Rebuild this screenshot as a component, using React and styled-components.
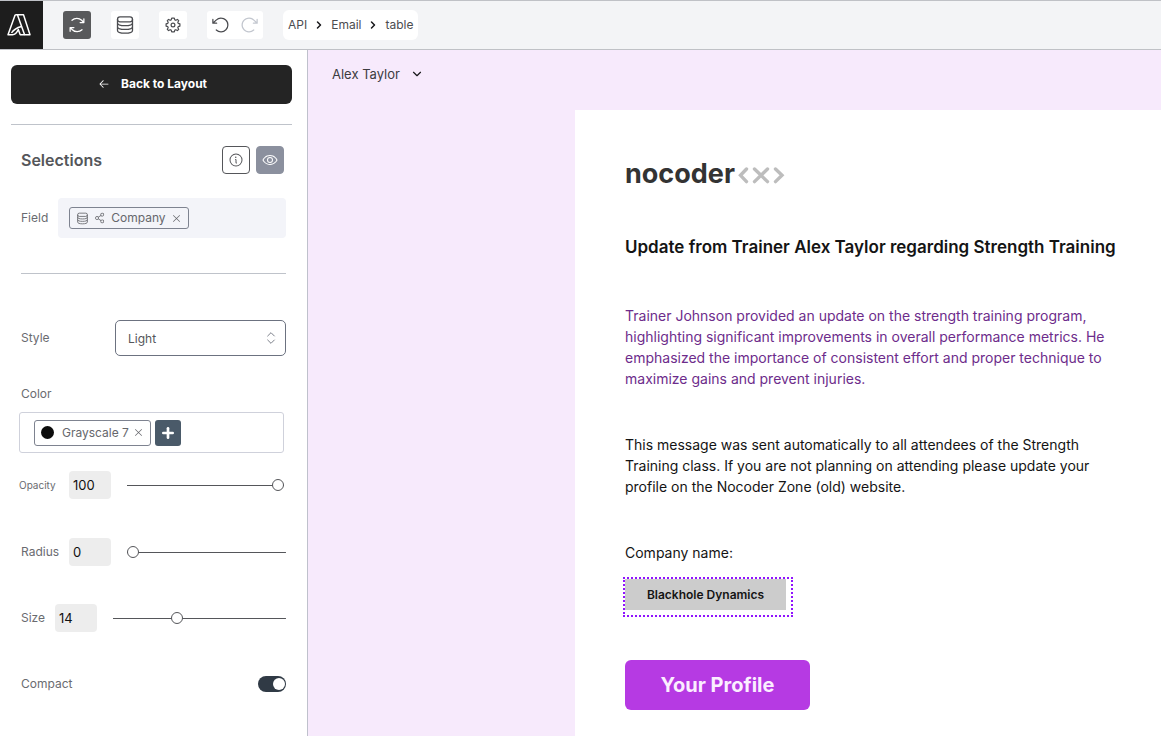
import React, { useState } from 'react';
import styled, { createGlobalStyle, css } from 'styled-components';
import {
    PiArrowsClockwise,
    PiArrowCounterClockwise,
    PiArrowClockwise,
    PiArrowLeft,
    PiInfo,
    PiEye,
    PiShareNetwork,
    PiX,
} from 'react-icons/pi';
import { LuChevronRight, LuChevronDown, LuChevronsUpDown, LuPlus } from 'react-icons/lu';

const GlobalStyle = createGlobalStyle`
    * {
        box-sizing: border-box;
    }

    body {
        margin: 0;
        background-color: #ffffff;
        color: #55565a;
        font-family: Inter, "Liberation Sans", sans-serif;
        font-size: 13px;
        line-height: 20px;
    }

    button, input, select {
        font: inherit;
        color: inherit;
        margin: 0;
    }

    button {
        border: 0;
        padding: 0;
        cursor: pointer;
    }

    svg {
        display: block;
        flex: none;
    }

    p, h1, h2 {
        margin: 0;
    }
`;

const Page = styled.div`
    display: flex;
    flex-direction: column;
    min-height: 100vh;
`;

const Header = styled.header`
    display: flex;
    align-items: center;
    height: 50px;
    background-color: #f3f4f6;
    border-top: 1px solid #bfc1c6;
    border-bottom: 1px solid #bfc1c6;
`;

const Brand = styled.a`
    display: flex;
    align-items: center;
    justify-content: center;
    width: 43px;
    height: 100%;
    padding-right: 4px;
    background-color: #1d1d1d;
    color: white;
`;

const Tools = styled.div`
    display: flex;
    gap: 20px;
    padding: 0 20px;
`;

const ToolGroup = styled.div`
    display: flex;
    border-radius: 3px;
    overflow: hidden;
`;

const ToolButton = styled.button`
    display: flex;
    align-items: center;
    justify-content: center;
    width: 28px;
    height: 28px;
    background-color: ${({ $active }) => ($active ? '#58595b' : '#ffffff')};
    color: ${({ $active }) => ($active ? '#ffffff' : '#4b4c50')};

    &:disabled {
        color: #c3c7cf;
    }
`;

const Breadcrumb = styled.nav`
    display: flex;
    align-items: center;
    gap: 6px;
    height: 30px;
    padding: 0 5px;
    border-radius: 6px;
    background-color: white;
    font-size: 12px;

    a {
        color: #4b4c50;
        text-decoration: none;
    }

    svg {
        color: #18181b;
    }
`;

const Main = styled.div`
    display: flex;
    flex: 1;
`;

const Sidebar = styled.aside`
    flex: none;
    width: 308px;
    padding: 15px 15px 0 11px;
    border-right: 1px solid #bfc1cc;
`;

const BackButton = styled.button`
    display: flex;
    align-items: center;
    justify-content: center;
    gap: 11px;
    width: 100%;
    height: 39px;
    padding: 0 0 2px 2px;
    border-radius: 6px;
    background-color: #242424;
    color: white;
    font-size: 12px;
    font-weight: 700;
`;

const Divider = styled.hr`
    height: 1px;
    margin: 0 0 46px;
    border: 0;
    background-color: #bfc3ca;
`;

const Panel = styled.div`
    display: flex;
    flex-direction: column;
    margin-top: 20px;
    border-top: 1px solid #bfc3ca;
    padding: 21px 6px 0 10px;
`;

const PanelHead = styled.div`
    display: flex;
    align-items: center;
    gap: 6px;
    padding-right: 2px;
    margin-bottom: 24px;

    h2 {
        flex: 1;
        font-size: 16px;
        font-weight: 600;
    }
`;

const SquareButton = styled.button`
    display: flex;
    align-items: center;
    justify-content: center;
    width: 28px;
    height: 28px;
    border-radius: 4px;
    border: 1px solid #55565a;
    background-color: white;

    ${({ $filled }) => $filled && css`
        border-color: #8b909e;
        background-color: #8b909e;
        color: white;
    `}
`;

const Row = styled.div`
    display: flex;
    align-items: center;
    gap: 10px;
    margin-bottom: ${({ $after }) => $after || 0}px;
`;

const Label = styled.label`
    min-width: ${({ $small }) => ($small ? '40px' : 'auto')};
    font-size: ${({ $small }) => ($small ? 10 : 12)}px;
    color: #6a6b70;
`;

const FieldBox = styled.div`
    display: flex;
    align-items: center;
    flex: 1;
    height: 40px;
    padding: 0 11px;
    border-radius: 4px;
    background-color: #f3f4f9;
`;

const Tag = styled.span`
    display: flex;
    align-items: center;
    gap: ${({ $tall }) => ($tall ? 4 : 5)}px;
    height: ${({ $tall }) => ($tall ? 26 : 22)}px;
    padding: 0 6px;
    border: 1px solid #7e8390;
    border-radius: 3px;
    color: #66676c;
    font-size: 12px;

    button {
        background: none;
    }
`;

const Dot = styled.span`
    width: 13px;
    height: 13px;
    margin-right: 4px;
    border-radius: 50%;
    background-color: #0c0c0c;
`;

const SelectWrapper = styled.div`
    display: grid;
    align-items: center;
    width: 171px;
    margin-left: auto;

    select {
        grid-area: 1 / 1;
        height: 36px;
        padding: 2px 12px 0;
        border: 1px solid #6c7280;
        border-radius: 5px;
        appearance: none;
        background-color: white;
        font-size: 12px;
    }

    svg {
        grid-area: 1 / 1;
        justify-self: end;
        margin-right: 7px;
        color: #7c808a;
        pointer-events: none;
    }
`;

const ColorField = styled.div`
    margin-right: 2px;
    margin-left: -2px;
`;

const ColorBox = styled.div`
    display: flex;
    align-items: center;
    gap: 4px;
    height: 41px;
    margin: 8px 0 18px;
    padding: 0 14px;
    border: 1px solid #cfd1db;
    border-radius: 3px;
`;

const AddButton = styled.button`
    display: flex;
    align-items: center;
    justify-content: center;
    width: 26px;
    height: 26px;
    border-radius: 3px;
    background-color: #4a5a69;
    color: white;
`;

const NumberInput = styled.input`
    width: 42px;
    height: 28px;
    margin-right: 6px;
    padding: 0 4px;
    border: 0;
    border-radius: 4px;
    background-color: #ededed;
    color: #111111;
`;

const Range = styled.input`
    flex: 1;
    min-width: 0;
    height: 12px;
    appearance: none;
    background: linear-gradient(#55565a, #55565a) center / 100% 1px no-repeat;

    &::-webkit-slider-thumb {
        appearance: none;
        width: 12px;
        height: 12px;
        border: 1px solid #55565a;
        border-radius: 50%;
        background-color: white;
    }
`;

const Switch = styled.input`
    display: flex;
    align-items: center;
    width: 28px;
    height: 16px;
    margin-left: auto;
    padding: 0 1px;
    border-radius: 8px;
    appearance: none;
    background-color: #a4a9b2;

    &::before {
        content: '';
        width: 12px;
        height: 12px;
        border-radius: 50%;
        background-color: white;
    }

    &:checked {
        justify-content: flex-end;
        background-color: #303a45;
    }
`;

const Canvas = styled.main`
    display: flex;
    flex-direction: column;
    flex: 1;
    min-width: 0;
    background-color: #f7eafc;
`;

const PersonButton = styled.button`
    display: flex;
    align-items: center;
    align-self: flex-start;
    gap: 10px;
    height: 20px;
    margin: 14px 24px 26px;
    background: none;
    color: #3c3c40;

    svg {
        color: #18181b;
    }
`;

const Sheet = styled.article`
    flex: 1;
    margin-left: 267px;
    padding: 50px 50px 26px;
    background-color: white;
    color: #141414;
    font-size: 14px;
    line-height: 21px;

    h1 {
        margin-bottom: 47px;
        font-size: 17px;
        font-weight: 600;
        line-height: 21px;
        white-space: nowrap;
    }
`;

const Wordmark = styled.div`
    display: flex;
    align-items: center;
    gap: 2px;
    height: 28px;
    margin-bottom: 49px;
    color: #333333;
    font-size: 27px;
    font-weight: 700;
    line-height: 28px;
`;

const Paragraph = styled.p`
    max-width: 490px;
    margin-bottom: ${({ $after }) => $after || 45}px;
    color: ${({ $accent }) => ($accent ? '#6d2c8b' : 'inherit')};
`;

const Selected = styled.div`
    width: 170px;
    height: 40px;
    margin: 0 -2px 43px;
    border: 2px dotted #9013fe;
`;

const CompanyName = styled.div`
    display: flex;
    align-items: center;
    justify-content: center;
    width: 161px;
    height: 31px;
    background-color: #cccccc;
    font-size: 12px;
    font-weight: 600;
`;

const ProfileButton = styled.button`
    width: 185px;
    height: 50px;
    border-radius: 6px;
    background-color: #b63ae3;
    color: #fbeeff;
    font-size: 20px;
    font-weight: 700;
`;

const BrandIcon = () => (
    <svg width="25" height="24" viewBox="7 13 25 24" fill="none" stroke="currentColor" strokeWidth="1.5" strokeLinejoin="round">
        <path d="M15.200 14.800H23.500L30 34.800H24.600L17.400 14.800" />
        <path d="M15.200 14.800 8 34.800H12.500C15.500 34.600 17 32.500 18.300 29.500L20.200 34.800H24.600" />
        <path d="M11.500 33C13.500 29.500 16.500 27.600 21.500 26.400" />
    </svg>
);

const DatabaseIcon = ({ size, strokeWidth = 1.3 }) => (
    <svg width={size} height={size} viewBox="0 0 20 20" fill="none" stroke="currentColor" strokeWidth={strokeWidth}>
        <rect x="2.500" y="1.800" width="15" height="5" rx="2.500" />
        <path d="M2.500 4.300v11.200c0 1.700 3 2.700 7.500 2.700s7.500-1 7.500-2.700V4.300" />
        <path d="M2.500 8c0 1.800 3 2.700 7.500 2.700s7.500-.9 7.500-2.700" />
        <path d="M2.500 11.700c0 1.800 3 2.700 7.500 2.700s7.500-.9 7.500-2.700" />
    </svg>
);

const GearIcon = () => (
    <svg width="16" height="16" viewBox="0 0 16 16" fill="none" stroke="currentColor" strokeWidth="1.200" strokeLinejoin="round">
        <path d="M6.700 1.200h2.600l.5 1.700 1 .4 1.600-.9 1.300 1.300-.9 1.500.4 1.100 1.700.5v2.400l-1.700.5-.4 1.100.9 1.500-1.300 1.300-1.600-.9-1 .4-.5 1.700H6.700l-.5-1.700-1-.4-1.600.9-1.300-1.300.9-1.500-.4-1.100-1.700-.5V6.800l1.700-.5.4-1.100-.9-1.500 1.300-1.300 1.600.9 1-.4z" />
        <circle cx="8" cy="8" r="1.900" />
    </svg>
);

const CodeMark = () => (
    <svg width="48" height="20" viewBox="0 0 48 20" fill="none" stroke="#bdbdbd" strokeWidth="3.4" strokeLinecap="round">
        <path d="M9.500 5 3.500 11.300 9.500 17.600" />
        <path d="M17.500 5 30.500 17.600M30.500 5 17.500 17.600" />
        <path d="M38.500 5 45 11.300 38.500 17.600" />
    </svg>
);

const SliderRow = ({ id, label, small, initial, min = 0, max = 100, after }) => {
    const [value, setValue] = useState(initial);
    const change = (e) => setValue(Number(e.target.value) || 0);

    return (
        <Row $after={after}>
            <Label htmlFor={id} $small={small}>{label}</Label>
            <NumberInput id={id} type="text" value={value} onChange={change} />
            <Range type="range" aria-label={label} min={min} max={max} value={value} onChange={change} />
        </Row>
    );
};

const TopBar = () => (
    <Header>
        <Brand href="#" aria-label="Home"><BrandIcon /></Brand>

        <Tools>
            <ToolGroup>
                <ToolButton $active aria-label="Sync"><PiArrowsClockwise size={20} /></ToolButton>
            </ToolGroup>
            <ToolGroup>
                <ToolButton aria-label="Data"><DatabaseIcon size={20} /></ToolButton>
            </ToolGroup>
            <ToolGroup>
                <ToolButton aria-label="Settings"><GearIcon /></ToolButton>
            </ToolGroup>
            <ToolGroup>
                <ToolButton aria-label="Undo"><PiArrowCounterClockwise size={20} /></ToolButton>
                <ToolButton aria-label="Redo" disabled><PiArrowClockwise size={20} /></ToolButton>
            </ToolGroup>
        </Tools>

        <Breadcrumb>
            <a href="#api">API</a>
            <LuChevronRight size={12} strokeWidth={3} />
            <a href="#email">Email</a>
            <LuChevronRight size={12} strokeWidth={3} />
            <a href="#table">table</a>
        </Breadcrumb>
    </Header>
);

const SettingsPanel = () => {
    const [compact, setCompact] = useState(true);

    return (
        <Sidebar>
            <BackButton><PiArrowLeft size={12} /> Back to Layout</BackButton>

            <Panel>
                <PanelHead>
                    <h2>Selections</h2>
                    <SquareButton aria-label="Info"><PiInfo size={16} /></SquareButton>
                    <SquareButton $filled aria-label="Preview"><PiEye size={16} /></SquareButton>
                </PanelHead>

                <Row $after={35}>
                    <Label as="span">Field</Label>
                    <FieldBox>
                        <Tag>
                            <DatabaseIcon size={13} />
                            <PiShareNetwork size={12} />
                            Company
                            <button aria-label="Remove Company"><PiX size={11} /></button>
                        </Tag>
                    </FieldBox>
                </Row>

                <Divider />

                <Row $after={28}>
                    <Label htmlFor="style">Style</Label>
                    <SelectWrapper>
                        <select id="style" defaultValue="Light">
                            <option>Light</option>
                            <option>Dark</option>
                        </select>
                        <LuChevronsUpDown size={16} strokeWidth={1.5} />
                    </SelectWrapper>
                </Row>

                <Label as="span">Color</Label>
                <ColorField>
                    <ColorBox>
                        <Tag $tall>
                            <Dot />
                            Grayscale 7
                            <button aria-label="Remove Grayscale 7"><PiX size={11} /></button>
                        </Tag>
                        <AddButton aria-label="Add color"><LuPlus size={16} strokeWidth={4} /></AddButton>
                    </ColorBox>

                    <SliderRow id="opacity" label="Opacity" small initial={100} after={39} />
                </ColorField>

                <SliderRow id="radius" label="Radius" initial={0} after={38} />
                <SliderRow id="size" label="Size" initial={14} max={39} after={42} />

                <Row>
                    <Label htmlFor="compact">Compact</Label>
                    <Switch
                        id="compact"
                        type="checkbox"
                        checked={compact}
                        onChange={() => setCompact(!compact)}
                    />
                </Row>
            </Panel>
        </Sidebar>
    );
};

const EmailPreview = () => (
    <Canvas>
        <PersonButton>Alex Taylor <LuChevronDown size={14} strokeWidth={2} /></PersonButton>

        <Sheet>
            <Wordmark>nocoder<CodeMark /></Wordmark>

            <h1>Update from Trainer Alex Taylor regarding Strength Training</h1>

            <Paragraph $accent>
                Trainer Johnson provided an update on the strength training program,
                highlighting significant improvements in overall performance metrics. He
                emphasized the importance of consistent effort and proper technique to
                maximize gains and prevent injuries.
            </Paragraph>
            <Paragraph>
                This message was sent automatically to all attendees of the Strength
                Training class. If you are not planning on attending please update your
                profile on the Nocoder Zone (old) website.
            </Paragraph>
            <Paragraph $after={14}>Company name:</Paragraph>

            <Selected>
                <CompanyName>Blackhole Dynamics</CompanyName>
            </Selected>

            <ProfileButton>Your Profile</ProfileButton>
        </Sheet>
    </Canvas>
);

const App = () => (
    <>
        <GlobalStyle />
        <Page>
            <TopBar />
            <Main>
                <SettingsPanel />
                <EmailPreview />
            </Main>
        </Page>
    </>
);

export default App;
